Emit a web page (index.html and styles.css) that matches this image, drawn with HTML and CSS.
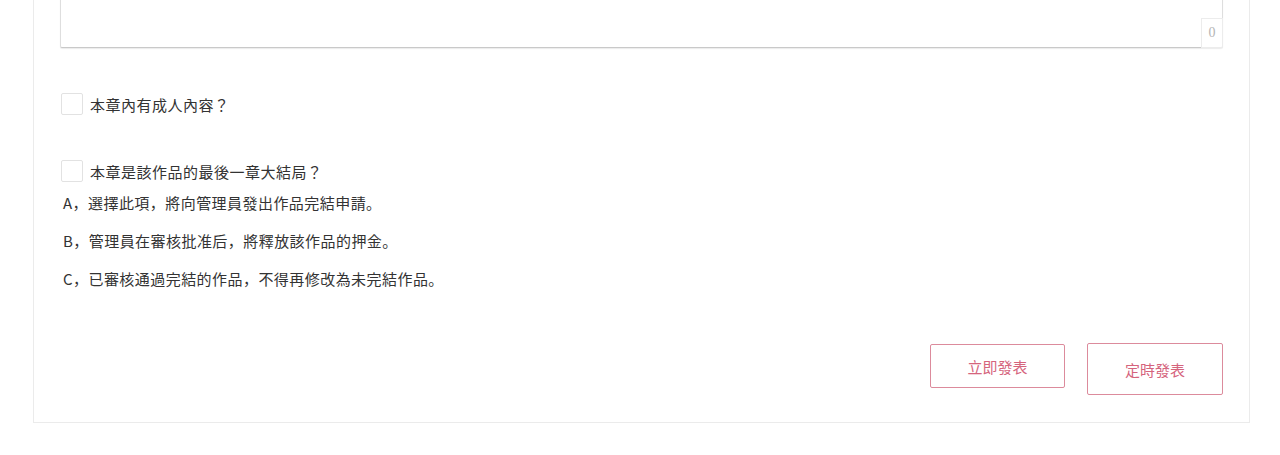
FILE: index.html
```html
<!DOCTYPE html>
<html lang="zh-Hant">
<head>
    <meta charset="UTF-8">
    <meta name="viewport" content="width=device-width, initial-scale=1.0">
    <title>發表章節</title>
    <link rel="stylesheet" href="styles.css">
</head>
<body>
    <div class="panel">
        <div class="editor">
            <textarea class="editor-text"></textarea>
            <span class="editor-count">0</span>
        </div>

        <label class="check-row">
            <span class="check-box"></span>
            <span class="check-label">本章內有成人內容？</span>
        </label>

        <label class="check-row">
            <span class="check-box"></span>
            <span class="check-label">本章是該作品的最後一章大結局？</span>
        </label>
        <div class="notes">
            <p>A，選擇此項，將向管理員發出作品完結申請。</p>
            <p>B，管理員在審核批准后，將釋放該作品的押金。</p>
            <p>C，已審核通過完結的作品，不得再修改為未完結作品。</p>
        </div>

        <div class="actions">
            <button class="btn btn-now">立即發表</button>
            <button class="btn btn-timed">定時發表</button>
        </div>
    </div>
</body>
</html>
```

FILE: styles.css
```css
body {
    margin: 0;
    background: #fff;
    font-family: "Noto Sans CJK JP", "Noto Sans", sans-serif;
    font-feature-settings: "locl" 0;
    color: #333;
}

.panel {
    width: 1217px;
    margin: -60px 0 0 33px;
    padding: 20px 26px 27px 26px;
    box-sizing: border-box;
    border: 1px solid #ebebeb;
    background: #fff;
}

.editor {
    position: relative;
}

.editor-text {
    display: block;
    width: 100%;
    height: 87px;
    box-sizing: border-box;
    border: 1px solid #dedede;
    border-bottom-color: #c9c9c9;
    border-radius: 2px;
    box-shadow: 0 1px 1px rgba(0, 0, 0, 0.08);
    resize: none;
    outline: none;
}

.editor-count {
    position: absolute;
    right: 0;
    bottom: 0;
    width: 22px;
    height: 30px;
    box-sizing: border-box;
    border: 1px solid #ececec;
    font-family: "Liberation Serif", serif;
    font-size: 14px;
    line-height: 28px;
    text-align: center;
    color: #b5b5b5;
}

.check-row {
    display: flex;
    align-items: center;
    height: 22px;
    margin-top: 45px;
}

.check-box {
    width: 22px;
    height: 22px;
    box-sizing: border-box;
    border: 1px solid #e2e2e2;
    border-radius: 2px;
    margin-left: 1px;
}

.check-label {
    margin-left: 7px;
    font-size: 15px;
    letter-spacing: 0.5px;
}

.notes {
    margin-top: 2px;
    padding-left: 3px;
}

.notes p {
    margin: 0;
    font-size: 15px;
    line-height: 38px;
    letter-spacing: 0.45px;
}

.actions {
    display: flex;
    justify-content: flex-end;
    align-items: flex-start;
    gap: 22px;
    margin-top: 45px;
}

.btn {
    background: #fff;
    border: 1px solid #dc8b9c;
    border-radius: 2px;
    color: #d5647d;
    font-family: inherit;
    font-size: 15px;
    cursor: pointer;
}

.btn-now {
    width: 135px;
    height: 44px;
    margin-top: 1px;
}

.btn-timed {
    width: 136px;
    height: 52px;
}
```
